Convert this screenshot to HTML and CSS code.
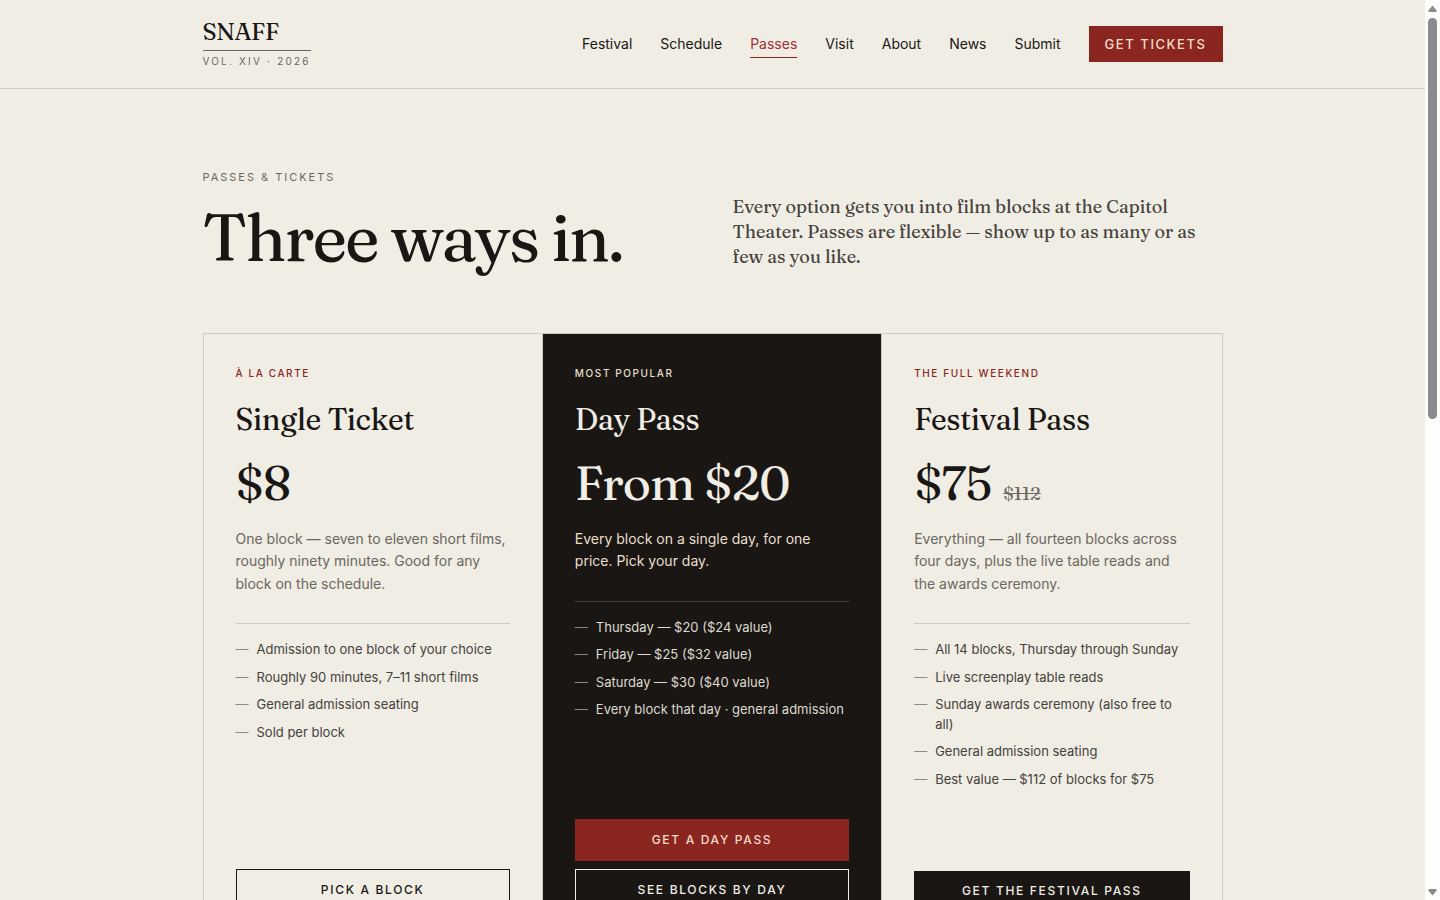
FILE: index.html
```
<!DOCTYPE html>
<html lang="en">
<head>
    <meta charset="UTF-8">
    <meta name="viewport" content="width=device-width, initial-scale=1.0">
    <title>Passes &amp; Tickets | SNAFF</title>
    <link rel="stylesheet" href="styles.css">
</head>
<body>
    <div class="page">
        <header class="header">
            <div class="container header-inner">
                <a href="#" class="logo">
                    <span class="logo-name">SNAFF</span>
                    <span class="logo-volume">Vol. XIV · 2026</span>
                </a>
                <nav class="nav-menu">
                    <a href="#">Festival</a>
                    <a href="#">Schedule</a>
                    <a href="#" class="active">Passes</a>
                    <a href="#">Visit</a>
                    <a href="#">About</a>
                    <a href="#">News</a>
                    <a href="#">Submit</a>
                    <a href="#" class="nav-cta">Get Tickets</a>
                </nav>
            </div>
        </header>

        <main class="container">
            <section class="intro">
                <div>
                    <p class="eyebrow">Passes &amp; Tickets</p>
                    <h1>Three ways in.</h1>
                </div>
                <p class="lede">Every option gets you into film blocks at the Capitol Theater. Passes are flexible — show up to as many or as few as you like.</p>
            </section>

            <section class="pass-grid">
                <article class="pass">
                    <p class="pass-label">À la carte</p>
                    <h2>Single Ticket</h2>
                    <p class="price">$8</p>
                    <p class="pass-text">One block — seven to eleven short films, roughly ninety minutes. Good for any block on the schedule.</p>
                    <ul class="pass-list">
                        <li>Admission to one block of your choice</li>
                        <li>Roughly 90 minutes, 7–11 short films</li>
                        <li>General admission seating</li>
                        <li>Sold per block</li>
                    </ul>
                    <div class="pass-actions">
                        <a href="#" class="button button-outline">Pick a block</a>
                    </div>
                </article>

                <article class="pass pass-featured">
                    <p class="pass-label">Most popular</p>
                    <h2>Day Pass</h2>
                    <p class="price">From $20</p>
                    <p class="pass-text">Every block on a single day, for one price. Pick your day.</p>
                    <ul class="pass-list">
                        <li>Thursday — $20 ($24 value)</li>
                        <li>Friday — $25 ($32 value)</li>
                        <li>Saturday — $30 ($40 value)</li>
                        <li>Every block that day · general admission</li>
                    </ul>
                    <div class="pass-actions">
                        <a href="#" class="button button-red">Get a day pass</a>
                        <a href="#" class="button button-outline">See blocks by day</a>
                    </div>
                </article>

                <article class="pass">
                    <p class="pass-label">The full weekend</p>
                    <h2>Festival Pass</h2>
                    <p class="price">$75 <s>$112</s></p>
                    <p class="pass-text">Everything — all fourteen blocks across four days, plus the live table reads and the awards ceremony.</p>
                    <ul class="pass-list">
                        <li>All 14 blocks, Thursday through Sunday</li>
                        <li>Live screenplay table reads</li>
                        <li>Sunday awards ceremony (also free to all)</li>
                        <li>General admission seating</li>
                        <li>Best value — $112 of blocks for $75</li>
                    </ul>
                    <div class="pass-actions">
                        <a href="#" class="button button-dark">Get the festival pass</a>
                    </div>
                </article>
            </section>
        </main>
    </div>

    <div class="scrollbar" aria-hidden="true">
        <svg width="9" height="7" viewBox="0 0 9 7"><path d="M4.5 0.5 L8.6 5.4 Q9 7 7.6 7 H1.4 Q0 7 0.4 5.4 Z"/></svg>
        <div class="scrollbar-track"><div class="scrollbar-thumb"></div></div>
        <svg width="9" height="7" viewBox="0 0 9 7"><path d="M4.5 6.5 L8.6 1.6 Q9 0 7.6 0 H1.4 Q0 0 0.4 1.6 Z"/></svg>
    </div>
</body>
</html>
```

FILE: styles.css
```
:root {
    --paper: #f0ede4;
    --ink: #1a1614;
    --ink-soft: #45413c;
    --muted: #6b6760;
    --rule: #cdcbba;
    --red: #8a261f;
    --serif: Fraunces, "Liberation Serif", serif;
    --sans: Inter, "Liberation Sans", sans-serif;
}

* {
    margin: 0;
    padding: 0;
    box-sizing: border-box;
}

html {
    scrollbar-width: none;
}

body {
    display: flex;
    align-items: flex-start;
    font-family: var(--sans);
    background: var(--paper);
    color: var(--ink);
}

a {
    color: inherit;
    text-decoration: none;
}

.page {
    flex: 1;
    min-width: 0;
}

.container {
    max-width: 1100px;
    margin: 0 auto;
    padding: 0 40px;
}

/* header */
.header {
    border-bottom: 1px solid var(--rule);
}

.header-inner {
    display: flex;
    justify-content: space-between;
    align-items: center;
    min-height: 88px;
}

.logo {
    display: flex;
    flex-direction: column;
}

.logo-name {
    font-family: var(--serif);
    font-size: 24px;
    line-height: 28px;
    letter-spacing: -0.02em;
    border-bottom: 1px solid var(--muted);
    padding-bottom: 4px;
}

.logo-volume {
    font-size: 10px;
    line-height: 18px;
    letter-spacing: 0.22em;
    text-transform: uppercase;
    color: var(--muted);
    padding-top: 1px;
}

.nav-menu {
    display: flex;
    align-items: center;
    gap: 28px;
    font-size: 14px;
    line-height: 20px;
}

.nav-menu a {
    padding: 4px 0 3px;
    border-bottom: 1px solid transparent;
}

.nav-menu .active {
    color: #a12f31;
    border-bottom-color: var(--red);
}

.nav-menu .nav-cta {
    background: var(--red);
    color: #f6dccb;
    border: 0;
    padding: 8px 16px;
    font-size: 13px;
    font-weight: 500;
    letter-spacing: 0.12em;
    text-transform: uppercase;
}

/* intro */
.intro {
    display: grid;
    grid-template-columns: 1fr 1fr;
    gap: 40px;
    align-items: end;
    padding: 80px 0 58px;
}

.eyebrow {
    font-size: 11px;
    line-height: 16px;
    letter-spacing: 0.18em;
    text-transform: uppercase;
    color: var(--muted);
    margin-bottom: 14px;
}

h1 {
    font-family: var(--serif);
    font-size: 66px;
    font-weight: 400;
    line-height: 76px;
    letter-spacing: -0.03em;
}

.lede {
    font-family: var(--serif);
    font-size: 18px;
    line-height: 25px;
    color: var(--ink-soft);
    padding-bottom: 6px;
}

/* passes */
.pass-grid {
    display: grid;
    grid-template-columns: repeat(3, 1fr);
    border: 1px solid var(--rule);
    margin-bottom: 80px;
}

.pass {
    display: flex;
    flex-direction: column;
    padding: 32px;
    border-right: 1px solid var(--rule);
}

.pass:last-child {
    border-right: 0;
}

.pass-label {
    font-size: 10px;
    line-height: 14px;
    font-weight: 500;
    letter-spacing: 0.16em;
    text-transform: uppercase;
    color: var(--red);
    margin-bottom: 22px;
}

.pass h2 {
    font-family: var(--serif);
    font-size: 30px;
    font-weight: 400;
    line-height: 36px;
    letter-spacing: -0.01em;
    margin-bottom: 20px;
}

.price {
    font-family: var(--serif);
    font-size: 48px;
    line-height: 50px;
    letter-spacing: -0.02em;
    margin-bottom: 20px;
}

.price s {
    font-size: 18px;
    line-height: 1;
    letter-spacing: 0;
    margin-left: 2px;
    color: var(--muted);
}

.pass-text {
    font-size: 14px;
    line-height: 1.6;
    color: var(--muted);
    margin-bottom: 28px;
}

.pass-list {
    list-style: none;
    display: flex;
    flex-direction: column;
    gap: 8px;
    border-top: 1px solid var(--rule);
    padding-top: 16px;
    margin-bottom: 82px;
    font-size: 13px;
    line-height: 1.5;
    color: var(--ink-soft);
}

.pass-list li {
    display: flex;
    gap: 8px;
}

.pass-list li::before {
    content: "—";
    color: #8d8a80;
}

.pass-actions {
    display: flex;
    flex-direction: column;
    gap: 8px;
    margin-top: auto;
}

.button {
    padding: 12px 16px;
    border: 1px solid transparent;
    font-size: 12px;
    line-height: 16px;
    font-weight: 500;
    letter-spacing: 0.14em;
    text-align: center;
    text-transform: uppercase;
}

.button-outline {
    border-color: currentColor;
}

.button-red {
    background: var(--red);
    border-color: var(--red);
    color: #f6dccb;
}

.button-dark {
    background: var(--ink);
    border: 0;
    color: var(--paper);
}

/* featured column */
.pass-featured {
    background: var(--ink);
    color: var(--paper);
}

.pass-featured .pass-label,
.pass-featured .pass-text {
    color: #e9dfcb;
}

.pass-featured .pass-list {
    color: #dedacf;
    border-top-color: #45413e;
}

/* scrollbar */
.scrollbar {
    position: sticky;
    top: 0;
    display: flex;
    flex-direction: column;
    align-items: center;
    width: 15px;
    height: 100vh;
    padding: 5px 0 4px;
    background: #fdfdfc;
}

.scrollbar svg {
    flex: none;
    fill: #8b8b8b;
}

.scrollbar-track {
    flex: 1;
    padding: 6px 0;
}

.scrollbar-thumb {
    width: 9px;
    height: 401px;
    border-radius: 5px;
    background: #8b8b8b;
}

@media (max-width: 900px) {
    .nav-menu a:not(.nav-cta) {
        display: none;
    }

    .intro,
    .pass-grid {
        grid-template-columns: 1fr;
    }

    .pass {
        border-right: 0;
        border-bottom: 1px solid var(--rule);
    }
}
```
